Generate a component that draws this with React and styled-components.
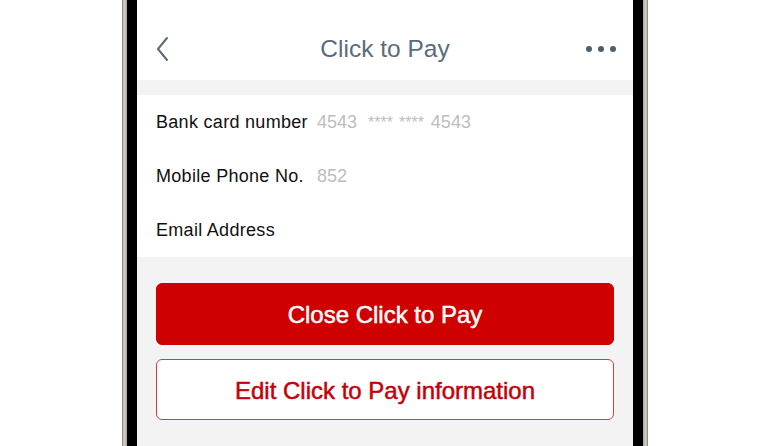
import React from 'react';
import styled, { createGlobalStyle } from 'styled-components';

const GlobalStyle = createGlobalStyle`
  html, body {
    margin: 0;
    padding: 0;
    background: #ffffff;
    font-family: "Liberation Sans", Arial, Helvetica, sans-serif;
  }
`;

const Page = styled.div`
  width: 771px;
  height: 446px;
  overflow: hidden;
  display: flex;
  justify-content: flex-start;
  padding-left: 122px;
  box-sizing: border-box;
`;

const Frame = styled.div`
  width: 526px;
  height: 446px;
  padding: 0 5px;
  box-sizing: border-box;
  background: linear-gradient(
    to right,
    #7c7872 0px,
    #d6d2cc 2px,
    #a8a49e 5px,
    #a8a49e 521px,
    #d6d2cc 524px,
    #7c7872 526px
  );
`;

const Bezel = styled.div`
  height: 100%;
  padding: 0 10px;
  background: #000;
`;

const Screen = styled.div`
  height: 100%;
  background: #f3f3f3;
  display: flex;
  flex-direction: column;
`;

const Header = styled.div`
  height: 80px;
  box-sizing: border-box;
  background: #fff;
  display: flex;
  align-items: center;
  justify-content: space-between;
  padding: 18px 17px 0 18px;
  position: relative;
`;

const Title = styled.div`
  position: absolute;
  left: 0;
  right: 0;
  text-align: center;
  font-size: 24.5px;
  color: #5b6b7b;
  pointer-events: none;
`;

const Dots = styled.div`
  display: flex;
  gap: 6px;
  span {
    width: 6px;
    height: 6px;
    border-radius: 50%;
    background: #4e5e6e;
  }
`;

const Spacer = styled.div`
  height: 15px;
`;

const List = styled.div`
  background: #fff;
  padding: 0 19px;
`;

const Row = styled.div`
  height: 54px;
  display: grid;
  grid-template-columns: 161px 1fr;
  align-items: center;
  font-size: 18px;
`;

const Label = styled.span`
  color: #111;
  letter-spacing: 0.3px;
`;

const Value = styled.span`
  color: #bdbdbd;
  font-size: 18px;
  white-space: nowrap;
`;

const Part = styled.span`
  font-size: ${p => (p.$stars ? '16px' : '18px')};
  margin-left: ${p => p.$gap || 0}px;
`;

const Actions = styled.div`
  display: flex;
  flex-direction: column;
  gap: 14px;
  padding: 26px 19px 0;
`;

const Button = styled.button`
  height: ${p => (p.$primary ? '62px' : '61px')};
  border-radius: 6px;
  border: 1px solid ${p => (p.$primary ? '#cf0000' : '#d93a40')};
  background: ${p => (p.$primary ? '#cf0000' : '#fff')};
  color: ${p => (p.$primary ? '#fff' : '#c4000a')};
  font-family: "Liberation Sans", Arial, sans-serif;
  font-size: 24px;
  font-weight: 400;
  -webkit-text-stroke: 0.5px currentColor;
  padding: 2px 0 0;
  cursor: pointer;
`;

export default function App() {
  return (
    <>
      <GlobalStyle />
      <Page>
        <Frame>
          <Bezel>
            <Screen>
              <Header>
                <svg width="16" height="26" viewBox="0 0 16 26">
                  <path d="M12 2 L3 13 L12 24" fill="none" stroke="#5b6b7b" strokeWidth="2" strokeLinecap="round" strokeLinejoin="round" />
                </svg>
                <Title>Click to Pay</Title>
                <Dots>
                  <span />
                  <span />
                  <span />
                </Dots>
              </Header>
              <Spacer />
              <List>
                <Row>
                  <Label>Bank card number</Label>
                  <Value>
                    <Part>4543</Part>
                    <Part $stars $gap={11}>****</Part>
                    <Part $stars $gap={6}>****</Part>
                    <Part $gap={7}>4543</Part>
                  </Value>
                </Row>
                <Row>
                  <Label>Mobile Phone No.</Label>
                  <Value>852</Value>
                </Row>
                <Row>
                  <Label>Email Address</Label>
                  <Value />
                </Row>
              </List>
              <Actions>
                <Button $primary>Close Click to Pay</Button>
                <Button>Edit Click to Pay information</Button>
              </Actions>
            </Screen>
          </Bezel>
        </Frame>
      </Page>
    </>
  );
}
